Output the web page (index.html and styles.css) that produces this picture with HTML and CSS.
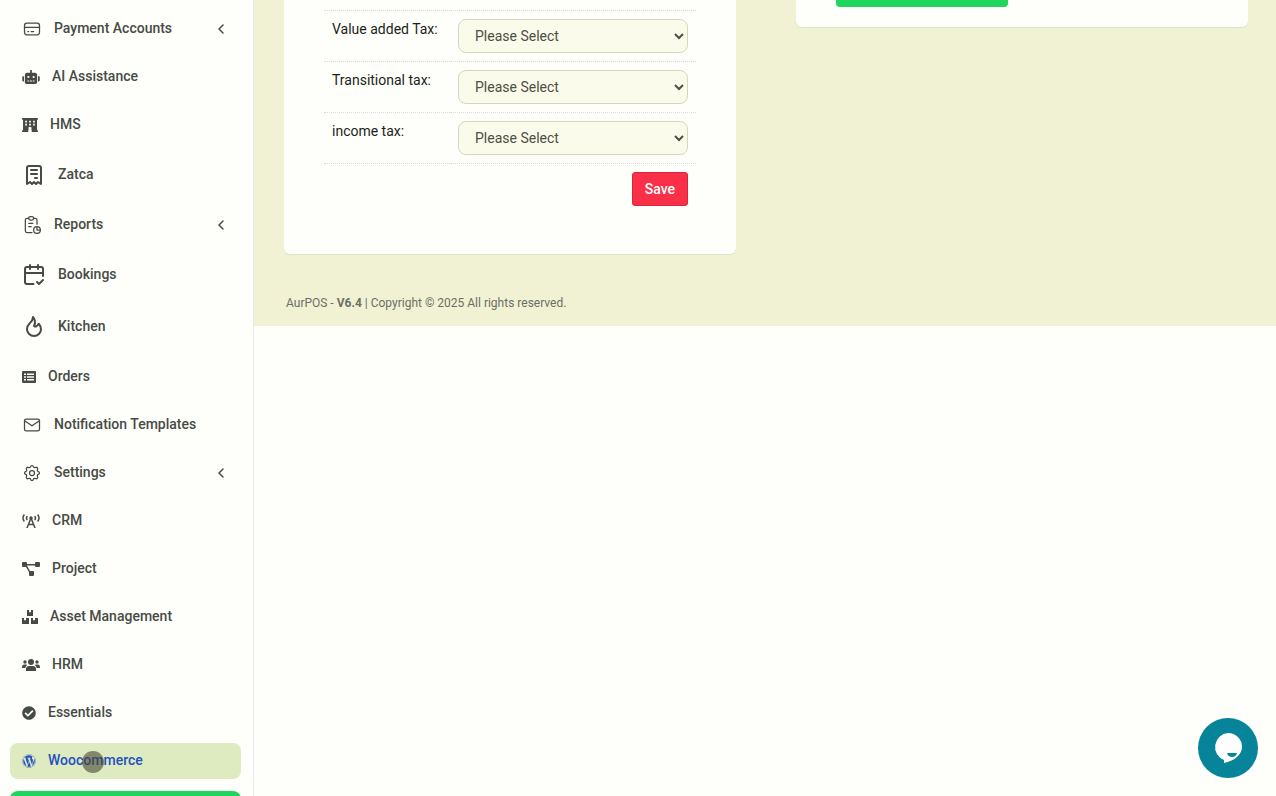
FILE: index.html
```html
<!DOCTYPE html>
<html lang="en">
<head>
<meta charset="utf-8">
<title>AurPOS</title>
<link rel="stylesheet" href="styles.css">
</head>
<body>
<div class="app">
  <aside class="sidebar">
    <nav class="menu">
      <a class="item" href="#"><svg class="line i20" viewBox="0 0 24 24"><rect x="3" y="5" width="18" height="14" rx="3"/><path d="M3 10h18M7 15h1M11 15h3"/></svg><span>Payment Accounts</span><svg class="chev" viewBox="0 0 16 16"><path d="M10 4 6 8l4 4"/></svg></a>
      <a class="item" href="#"><svg class="fill i18" viewBox="0 0 640 512"><path fill-rule="evenodd" d="M288 0h64v96h112c44 0 80 36 80 80v272c0 35-29 64-64 64H160c-35 0-64-29-64-64V176c0-44 36-80 80-80h112zM224 216a40 40 0 1 0 0 80 40 40 0 0 0 0-80zm192 0a40 40 0 1 0 0 80 40 40 0 0 0 0-80zM192 384v32h64v-32zm96 0v32h64v-32zm96 0v32h64v-32zM32 224h32v192H32c-18 0-32-14-32-32V256c0-18 14-32 32-32zm544 0h32c18 0 32 14 32 32v128c0 18-14 32-32 32h-32z"/></svg><span>AI Assistance</span></a>
      <a class="item" href="#"><svg class="fill i16" viewBox="0 0 576 512"><path fill-rule="evenodd" d="M0 0h576v64h-32v384h32v64H352v-96h-32a64 64 0 0 1 32-32 64 64 0 0 0-128 0 64 64 0 0 1 32 32h-32v96H0v-64h32V64H0zM112 96v64h64V96zm144 0v64h64V96zm144 0v64h64V96zM112 208v64h64v-64zm144 0v64h64v-64zm144 0v64h64v-64z"/></svg><span>HMS</span></a>
      <a class="item" href="#"><svg class="line bold i24" viewBox="0 0 24 24"><path d="M5 21V5a2 2 0 0 1 2-2h10a2 2 0 0 1 2 2v16l-3-2-2 2-2-2-2 2-2-2-3 2M9 7h6M9 11h6M13 15h2"/></svg><span>Zatca</span></a>
      <a class="item" href="#"><svg class="line i20" viewBox="0 0 24 24"><path d="M8 4H6a2 2 0 0 0-2 2v13a2 2 0 0 0 2 2h6M18 14v4h4M18 11V6a2 2 0 0 0-2-2h-2M8 10h5M8 14h3"/><rect x="8" y="2" width="6" height="4" rx="2"/><circle cx="18" cy="18" r="4"/></svg><span>Reports</span><svg class="chev" viewBox="0 0 16 16"><path d="M10 4 6 8l4 4"/></svg></a>
      <a class="item" href="#"><svg class="line bold i24" viewBox="0 0 24 24"><path d="M11.500 21H5a2 2 0 0 1-2-2V6a2 2 0 0 1 2-2h14a2 2 0 0 1 2 2v7M16 2v4M8 2v4M3 10h18M15 19l2 2 4-4"/></svg><span>Bookings</span></a>
      <a class="item" href="#"><svg class="line bold i24" viewBox="0 0 24 24"><path d="M12 10.941c2.333-3.308.167-7.823-1-8.941 0 3.395-2.235 5.299-3.667 6.706C5.903 10.114 5 12 5 14.294 5 17.998 8.134 21 12 21s7-3.002 7-6.706c0-1.712-1.232-4.403-2.333-5.588-2.084 3.353-3.257 3.353-4.667 2.235"/></svg><span>Kitchen</span></a>
      <a class="item" href="#"><svg class="fill i14" viewBox="0 0 14 14"><path fill-rule="evenodd" d="M1 1h12a1 1 0 0 1 1 1v10a1 1 0 0 1-1 1H1a1 1 0 0 1-1-1V2a1 1 0 0 1 1-1zm1 2.500v1.500h2V3.500zm3 0v1.500h7V3.500zM2 6.300v1.500h2V6.300zm3 0v1.500h7V6.300zM2 9.100v1.500h2V9.100zm3 0v1.500h7V9.100z"/></svg><span>Orders</span></a>
      <a class="item" href="#"><svg class="line i20" viewBox="0 0 24 24"><rect x="3" y="5" width="18" height="14" rx="2"/><path d="m3 7 9 6 9-6"/></svg><span>Notification Templates</span></a>
      <a class="item" href="#"><svg class="line i20" viewBox="0 0 24 24"><path d="M10.325 4.317c.426-1.756 2.924-1.756 3.350 0a1.724 1.724 0 0 0 2.573 1.066c1.543-.94 3.310.826 2.370 2.370a1.724 1.724 0 0 0 1.065 2.572c1.756.426 1.756 2.924 0 3.350a1.724 1.724 0 0 0-1.066 2.573c.94 1.543-.826 3.310-2.370 2.370a1.724 1.724 0 0 0-2.572 1.065c-.426 1.756-2.924 1.756-3.350 0a1.724 1.724 0 0 0-2.573-1.066c-1.543.94-3.310-.826-2.370-2.370a1.724 1.724 0 0 0-1.065-2.572c-1.756-.426-1.756-2.924 0-3.350a1.724 1.724 0 0 0 1.066-2.573c-.94-1.543.826-3.310 2.370-2.370 1 .608 2.296.07 2.572-1.065z"/><circle cx="12" cy="12" r="3"/></svg><span>Settings</span><svg class="chev" viewBox="0 0 16 16"><path d="M10 4 6 8l4 4"/></svg></a>
      <a class="item" href="#"><svg class="line thick i18" viewBox="0 0 18 14"><path d="M2 1Q0 4 2 7M16 1q2 3 0 6M5 2.500q-1 1.500 0 3M13 2.500q1 1.500 0 3M9 4 5 14M9 4l4 10M7 10.500h4"/><circle cx="9" cy="4" r="1"/></svg><span>CRM</span></a>
      <a class="item" href="#"><svg class="fill i18" viewBox="0 0 18 14"><path d="M1 0h3a1 1 0 0 1 1 1v1h8V1a1 1 0 0 1 1-1h3a1 1 0 0 1 1 1v3a1 1 0 0 1-1 1h-3a1 1 0 0 1-1-1V3.500H5L8 9h3a1 1 0 0 1 1 1v3a1 1 0 0 1-1 1H8a1 1 0 0 1-1-1v-3L4 5H1a1 1 0 0 1-1-1V1a1 1 0 0 1 1-1z"/></svg><span>Project</span></a>
      <a class="item" href="#"><svg class="fill i16" viewBox="0 0 16 14"><path d="M5 0h2v2.500l1-.6 1 .6V0h2v6H5zM0 8h2v2.500l1-.6 1 .6V8h3v6H0zM9 8h2v2.500l1-.6 1 .6V8h3v6H9z"/></svg><span>Asset Management</span></a>
      <a class="item" href="#"><svg class="fill i18" viewBox="0 0 18 14"><circle cx="9" cy="4" r="3"/><circle cx="3" cy="4" r="1.700"/><circle cx="15" cy="4" r="1.700"/><path d="M4 13v-2q0-3 3-3h4q3 0 3 3v2zM0 9q0-2.500 2-2.500h2q.8 0 1.300.6Q3.500 8 3.300 10H0zM18 9q0-2.500-2-2.500h-2q-.8 0-1.300.6 1.800.9 2 2.900H18z"/></svg><span>HRM</span></a>
      <a class="item" href="#"><svg class="fill i14" viewBox="0 0 512 512"><path d="M504 256c0 136.967-111.033 248-248 248S8 392.967 8 256 119.033 8 256 8s248 111.033 248 248zM227.314 387.314l184-184c6.248-6.248 6.248-16.379 0-22.627l-22.627-22.627c-6.248-6.249-16.379-6.249-22.628 0L216 308.118l-70.059-70.059c-6.248-6.248-16.379-6.248-22.628 0l-22.627 22.627c-6.248 6.248-6.248 16.379 0 22.627l104 104c6.249 6.249 16.379 6.249 22.628.001z"/></svg><span>Essentials</span></a>
      <a class="item active" href="#"><svg class="fill i14" viewBox="0 0 512 512"><path d="M61.700 169.400l101.500 278C92.200 413 43.300 340.200 43.300 256c0-30.900 6.600-60.100 18.400-86.600zm337.900 75.900c0-26.300-9.400-44.500-17.500-58.700-10.800-17.500-20.900-32.400-20.900-49.900 0-19.600 14.800-37.800 35.700-37.800.9 0 1.800.1 2.800.2-37.900-34.700-88.300-55.900-143.700-55.900-74.300 0-139.700 38.100-177.800 95.900 5 .2 9.700.3 13.700.3 22.200 0 56.700-2.700 56.700-2.700 11.500-.7 12.800 16.200 1.400 17.500 0 0-11.500 1.300-24.300 2l77.500 230.400L249.800 247l-33.100-90.800c-11.500-.7-22.300-2-22.300-2-11.500-.7-10.100-18.200 1.300-17.500 0 0 35.100 2.700 56 2.700 22.200 0 56.700-2.700 56.700-2.700 11.500-.7 12.800 16.200 1.400 17.500 0 0-11.500 1.300-24.300 2l76.900 228.700 21.200-70.900c9-29.400 16-50.500 16-68.700zm-139.900 29.300l-63.800 185.500c19.100 5.600 39.200 8.700 60.100 8.700 24.800 0 48.500-4.300 70.600-12.100-.6-.9-1.100-1.900-1.500-2.900l-65.400-179.200zm183-120.700c.9 6.800 1.400 14 1.400 21.900 0 21.600-4 45.800-16.200 76.200l-65 187.900C426.200 403 468.700 334.500 468.700 256c0-37-9.400-71.800-26-102.100zM504 256c0 136.800-111.300 248-248 248C119.200 504 8 392.700 8 256 8 119.200 119.200 8 256 8c136.700 0 248 111.200 248 248zm-11.400 0c0-130.500-106.200-236.600-236.600-236.600C125.500 19.400 19.400 125.500 19.400 256S125.600 492.600 256 492.600c130.500 0 236.600-106.100 236.600-236.600z"/></svg><span>Woocommerce</span><i class="pointer"></i></a>
      <a class="item promo" href="#" aria-label="More"></a>
    </nav>
  </aside>
  <div class="page">
    <main class="content">
      <section class="card">
        <form>
          <table class="taxes">
            <tr><td class="name"><label for="vat">Value added Tax:</label></td><td><select id="vat"><option>Please Select</option></select></td></tr>
            <tr><td class="name"><label for="transitional">Transitional tax:</label></td><td><select id="transitional"><option>Please Select</option></select></td></tr>
            <tr><td class="name"><label for="income">income tax:</label></td><td><select id="income"><option>Please Select</option></select></td></tr>
            <tr><td></td><td class="actions"><button class="save" type="button">Save</button></td></tr>
          </table>
        </form>
      </section>
      <section class="card side"><button class="submit" type="button" aria-label="Submit"></button></section>
    </main>
    <footer class="footer">AurPOS - <b>V6.4</b> | Copyright © 2025 All rights reserved.</footer>
  </div>
</div>
<button class="chat" type="button" aria-label="Chat"><svg viewBox="0 0 60 60"><path fill="#fefefc" d="M30 15a14 14 0 0 1 14 14c0 8-8 14-18 16v-3A14 14 0 0 1 30 15z"/><path fill="#07849a" d="M29 35h10q-1 4-5 4t-5-4z"/></svg></button>
</body>
</html>
```
FILE: styles.css
```css
* { box-sizing: border-box; }
body {
  margin: 0;
  background: #fefefa;
  color: #1c1e20;
  font: 14px/20px Roboto, "Liberation Sans", sans-serif;
}
.app { display: flex; height: 100vh; overflow: hidden; }
.sidebar {
  flex: 0 0 254px;
  border-right: 1px solid #e9ebf0;
  overflow: hidden;
}
.menu { display: flex; flex-direction: column; gap: 12px; padding: 11px 12px 0 10px; }
.item {
  position: relative;
  display: flex;
  flex-shrink: 0;
  align-items: center;
  gap: 12px;
  min-height: 36px;
  padding: 8px 12px;
  border-radius: 8px;
  color: #474b45;
  font-weight: 500;
  line-height: 18px;
  text-decoration: none;
}
.item span { padding-bottom: 2px; }
.item svg { display: block; flex: none; }
.active { background: #deebc0; color: #2450c0; }
.promo { background: #20d55c; }
.fill { fill: currentColor; height: 14px; }
.line {
  fill: none;
  stroke: currentColor;
  stroke-width: 1.5;
  stroke-linecap: round;
  stroke-linejoin: round;
}
.bold { stroke-width: 2; }
.i14 { width: 14px; }
.i16 { width: 16px; }
.i18 { width: 18px; height: 14px; }
.i20 { width: 20px; height: 20px; }
.i24 { width: 24px; height: 24px; }
.chev {
  width: 16px;
  height: 16px;
  margin-left: auto;
  fill: none;
  stroke: currentColor;
  stroke-width: 1.5;
  stroke-linecap: round;
  stroke-linejoin: round;
}
.pointer {
  position: absolute;
  left: 72px;
  top: 8px;
  width: 22px;
  height: 22px;
  border-radius: 50%;
  background: rgba(70, 70, 50, .6);
}
.page { flex: 1; min-width: 0; align-self: flex-start; background: #f1f2d4; }
.content {
  display: grid;
  grid-template-columns: 1fr 1fr;
  align-items: start;
  gap: 60px;
  padding: 0 28px 0 30px;
}
.card {
  padding: 10px 40px 40px;
  background: #fefefa;
  border-radius: 0 0 6px 6px;
  box-shadow: 0 1px 1px #d9e6cc;
}
.side { padding: 0 40px 20px; }
.taxes { width: 100%; border-collapse: separate; border-spacing: 0; }
.taxes td { padding: 8px; border-top: 1px dotted #d8dae6; vertical-align: top; }
.taxes .name { width: 126px; padding-right: 0; }
.taxes .actions { text-align: right; }
.taxes select {
  display: block;
  width: 100%;
  height: 34px;
  padding: 0 12px;
  border: 1px solid #d5d8b8;
  border-radius: 8px;
  background: #fbfbec;
  color: #4c4f42;
  font: inherit;
}
.save {
  display: inline-block;
  height: 34px;
  padding: 0 12px;
  border: 1px solid #d8263c;
  border-radius: 3px;
  background: #fa3049;
  color: #fff;
  font: 500 14px/20px Roboto, "Liberation Sans", sans-serif;
  vertical-align: top;
}
.submit {
  display: block;
  width: 172px;
  height: 7px;
  padding: 0;
  border: 0;
  border-radius: 0 0 4px 4px;
  background: #20d55c;
}
.footer { padding: 39px 32px 13px; color: #6b7065; font-size: 12px; }
.chat {
  position: fixed;
  right: 18px;
  bottom: 18px;
  width: 60px;
  height: 60px;
  padding: 0;
  border: 0;
  border-radius: 50%;
  background: #07849a;
}
.chat svg { display: block; width: 60px; height: 60px; }
```
